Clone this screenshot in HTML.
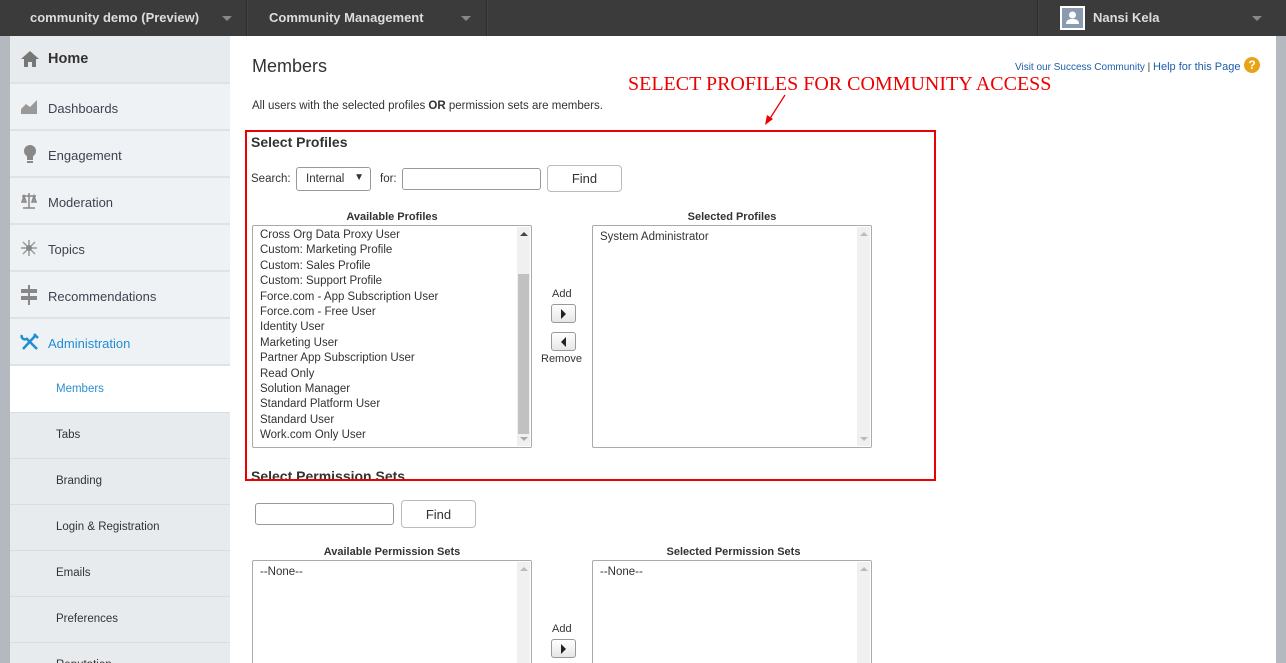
<!DOCTYPE html>
<html><head><style>
*{box-sizing:border-box;margin:0;padding:0}
html,body{width:1286px;height:663px;overflow:hidden}
body{background:#fff;font-family:"Liberation Sans",Arial,sans-serif;position:relative;color:#333}
.a{position:absolute}
.top{left:0;top:0;width:1286px;height:36px;background:#3b3b3b}
.tt{color:#ddd;font-weight:bold;font-size:13px;top:10px}
.dv{top:0;width:2px;height:36px;background:#2c2c2c;border-right:1px solid #444}
.car{top:16px;width:0;height:0;border-left:5px solid transparent;border-right:5px solid transparent;border-top:5px solid #888}
.lstrip{left:0;top:36px;width:10px;height:627px;background:#b3b9bf}
.rstrip{left:1276px;top:36px;width:10px;height:627px;background:#b3b9bf}
.side{left:10px;top:36px;width:220px;height:627px;background:#e9ecef;border-right:1px solid #dde}
.it{position:absolute;left:10px;width:220px;background:#eff2f4;border-bottom:2px solid #dfe3e6;font-size:13px;color:#3d4450}
.it span{position:absolute;left:38px}
.it svg{position:absolute;left:10px}
.sub{position:absolute;left:10px;width:220px;background:#e8ebee;border-bottom:1px solid #d9dde0;font-size:11.5px;color:#333}
.sub span{position:absolute;left:46px}
.lb{border:1px solid #aaa;border-radius:2px;background:#fff;font-size:11.5px;color:#333;overflow:hidden}
.r{padding-left:7px;line-height:15.4px}
.sb{position:absolute;right:1px;top:1px;bottom:1px;width:13px;background:#f0f0f0}
.up,.dn{position:absolute;left:3px;width:0;height:0;border-left:4px solid transparent;border-right:4px solid transparent}
.up{top:5px;border-bottom:4px solid #bbb}
.dn{bottom:5px;border-top:4px solid #bbb}
.btn{border:1px solid #bbb;border-radius:4px;background:#fff;font-size:13px;color:#333;text-align:center}
.inp{border:1px solid #999;border-radius:3px;background:#fff}
.hd{font-size:11px;font-weight:bold;color:#333;text-align:center}
.ab{width:25px;height:19px;border:1px solid #999;border-radius:3px;background:linear-gradient(#fff,#e6e6e6)}
</style></head><body>
<div class="a top"></div>
<div class="a tt" style="left:30px">community demo (Preview)</div>
<div class="a car" style="left:222px"></div>
<div class="a dv" style="left:246px"></div>
<div class="a tt" style="left:269px">Community Management</div>
<div class="a car" style="left:461px"></div>
<div class="a dv" style="left:486px"></div>
<div class="a dv" style="left:1037px"></div>
<div class="a" style="left:1060px;top:6px;width:25px;height:24px;border:2px solid #fff;background:#8a9bb0"><svg width="21" height="20" viewBox="0 0 21 20"><circle cx="10.5" cy="7" r="3.5" fill="#fff"/><path d="M4 16c0-4 3-5 6.5-5s6.5 1 6.5 5z" fill="#fff"/></svg></div>
<div class="a tt" style="left:1093px">Nansi Kela</div>
<div class="a car" style="left:1252px"></div>

<div class="a lstrip"></div><div class="a rstrip"></div>
<div class="a side"></div>
<div class="it" style="top:36px;height:48px;background:#e8ebee"><svg width="20" height="18" style="top:14px" viewBox="0 0 20 18"><path d="M10 1L1 9h3v8h4v-5h4v5h4V9h3z" fill="#777"/></svg><span style="top:15px;font-size:14.5px;font-weight:bold;color:#333">Home</span></div>
<div class="it" style="top:84px;height:47px"><svg width="18" height="16" style="top:15px" viewBox="0 0 18 16"><path d="M1 15V10l5-5 4 3 7-7v14z" fill="#999"/></svg><span style="top:17px">Dashboards</span></div>
<div class="it" style="top:131px;height:47px"><svg width="16" height="20" style="top:13px;left:12px" viewBox="0 0 16 20"><circle cx="8" cy="7" r="6" fill="#888"/><rect x="5" y="12" width="6" height="4" fill="#888"/><rect x="5" y="17" width="6" height="2" fill="#888"/></svg><span style="top:17px">Engagement</span></div>
<div class="it" style="top:178px;height:47px"><svg width="18" height="18" style="top:14px" viewBox="0 0 18 18"><path d="M9 1v15M3 16h12M2 4h14M4 4l-2 6h4zM14 4l-2 6h4z" stroke="#888" stroke-width="1.5" fill="#aaa"/></svg><span style="top:17px">Moderation</span></div>
<div class="it" style="top:225px;height:47px"><svg width="18" height="18" style="top:14px" viewBox="0 0 18 18"><path d="M9 1v16M1 9h16M3 3l12 12M15 3L3 15" stroke="#999" stroke-width="1.5"/><circle cx="9" cy="9" r="3" fill="#888"/></svg><span style="top:17px">Topics</span></div>
<div class="it" style="top:272px;height:47px"><svg width="18" height="20" style="top:13px" viewBox="0 0 18 20"><rect x="8" y="0" width="2" height="20" fill="#888"/><rect x="1" y="4" width="16" height="4" fill="#888"/><rect x="1" y="11" width="16" height="4" fill="#888"/></svg><span style="top:17px">Recommendations</span></div>
<div class="it" style="top:319px;height:47px"><svg width="20" height="20" style="top:13px" viewBox="0 0 20 20"><path d="M3 17L15 4M14 2l4 4M17 17L6 6M2 3a3 3 0 0 0 4 4" stroke="#1f8dd6" stroke-width="2.5" fill="none"/></svg><span style="top:17px;color:#1f8dd6">Administration</span></div>
<div class="sub" style="top:366px;height:47px;background:#fff"><span style="top:17px;color:#2b8fcf">Members</span></div>
<div class="sub" style="top:413px;height:46px"><span style="top:16px">Tabs</span></div>
<div class="sub" style="top:459px;height:46px"><span style="top:16px">Branding</span></div>
<div class="sub" style="top:505px;height:46px"><span style="top:16px">Login &amp; Registration</span></div>
<div class="sub" style="top:551px;height:46px"><span style="top:16px">Emails</span></div>
<div class="sub" style="top:597px;height:46px"><span style="top:16px">Preferences</span></div>
<div class="sub" style="top:643px;height:46px"><span style="top:16px">Reputation</span></div>

<div class="a" style="left:252px;top:56px;font-size:18px;color:#333">Members</div>
<div class="a" style="left:1015px;top:61px;font-size:10px;color:#1c5ea8">Visit our Success Community <span style="color:#333">|</span> <span style="font-size:11px">Help for this Page</span></div>
<div class="a" style="left:1244px;top:57px;width:16px;height:16px;border-radius:50%;background:#e8a317;color:#fff;font-size:12px;font-weight:bold;text-align:center;line-height:16px">?</div>
<div class="a" style="left:628px;top:73px;font-family:'Liberation Serif',serif;font-size:20px;color:#e00;white-space:nowrap">SELECT PROFILES FOR COMMUNITY ACCESS</div>
<svg class="a" style="left:760px;top:92px" width="30" height="36"><path d="M25 3L9 28" stroke="#e00" stroke-width="1.3"/><path d="M5 33l2-10 6 4z" fill="#e00"/></svg>
<div class="a" style="left:252px;top:100px;font-size:11.5px;color:#333">All users with the selected profiles <b>OR</b> permission sets are members.</div>

<div class="a" style="left:251px;top:134px;font-size:14px;font-weight:bold;color:#333">Select Profiles</div>
<div class="a" style="left:251px;top:173px;font-size:11.5px">Search:</div>
<div class="a inp" style="left:296px;top:167px;width:75px;height:24px;border-color:#999;font-size:11.5px;padding:5px 9px">Internal<span style="position:absolute;right:6px;top:4px;font-size:10px">▼</span></div>
<div class="a" style="left:380px;top:173px;font-size:11.5px">for:</div>
<div class="a inp" style="left:402px;top:168px;width:139px;height:22px"></div>
<div class="a btn" style="left:547px;top:165px;width:75px;height:27px;line-height:26px">Find</div>

<div class="a hd" style="left:252px;top:211px;width:280px">Available Profiles</div>
<div class="a hd" style="left:592px;top:211px;width:280px">Selected Profiles</div>
<div class="a lb" style="left:252px;top:225px;width:280px;height:223px;padding-top:2px">
<div class="r">Cross Org Data Proxy User</div><div class="r">Custom: Marketing Profile</div><div class="r">Custom: Sales Profile</div><div class="r">Custom: Support Profile</div><div class="r">Force.com - App Subscription User</div><div class="r">Force.com - Free User</div><div class="r">Identity User</div><div class="r">Marketing User</div><div class="r">Partner App Subscription User</div><div class="r">Read Only</div><div class="r">Solution Manager</div><div class="r">Standard Platform User</div><div class="r">Standard User</div><div class="r">Work.com Only User</div>
<div class="sb"><div style="position:absolute;left:1px;top:47px;width:11px;height:160px;background:#c1c1c1"></div><div class="up" style="border-bottom-color:#444"></div><div class="dn" style="border-top-color:#aaa"></div></div></div>
<div class="a lb" style="left:592px;top:225px;width:280px;height:223px;padding-top:4px"><div class="r">System Administrator</div>
<div class="sb"><div class="up"></div><div class="dn"></div></div></div>
<div class="a" style="left:552px;top:288px;font-size:11px">Add</div>
<div class="a ab" style="left:551px;top:304px"><div style="margin:4px 0 0 9px;border-top:5px solid transparent;border-bottom:5px solid transparent;border-left:5px solid #222;width:0"></div></div>
<div class="a ab" style="left:551px;top:332px"><div style="margin:4px 0 0 9px;border-top:5px solid transparent;border-bottom:5px solid transparent;border-right:5px solid #222;width:0"></div></div>
<div class="a" style="left:541px;top:353px;font-size:11px">Remove</div>

<div class="a" style="left:251px;top:468px;font-size:14px;font-weight:bold;color:#333">Select Permission Sets</div>
<div class="a" style="left:245px;top:130px;width:691px;height:351px;border:2px solid #e00"></div>

<div class="a inp" style="left:255px;top:503px;width:139px;height:22px"></div>
<div class="a btn" style="left:401px;top:500px;width:75px;height:28px;line-height:27px">Find</div>
<div class="a hd" style="left:252px;top:546px;width:280px">Available Permission Sets</div>
<div class="a hd" style="left:592px;top:546px;width:283px">Selected Permission Sets</div>
<div class="a lb" style="left:252px;top:560px;width:280px;height:120px;padding-top:4px"><div class="r">--None--</div><div class="sb"><div class="up"></div></div></div>
<div class="a lb" style="left:592px;top:560px;width:280px;height:120px;padding-top:4px"><div class="r">--None--</div><div class="sb"><div class="up"></div></div></div>
<div class="a" style="left:552px;top:623px;font-size:11px">Add</div>
<div class="a ab" style="left:551px;top:639px"><div style="margin:4px 0 0 9px;border-top:5px solid transparent;border-bottom:5px solid transparent;border-left:5px solid #222;width:0"></div></div>
</body></html>
